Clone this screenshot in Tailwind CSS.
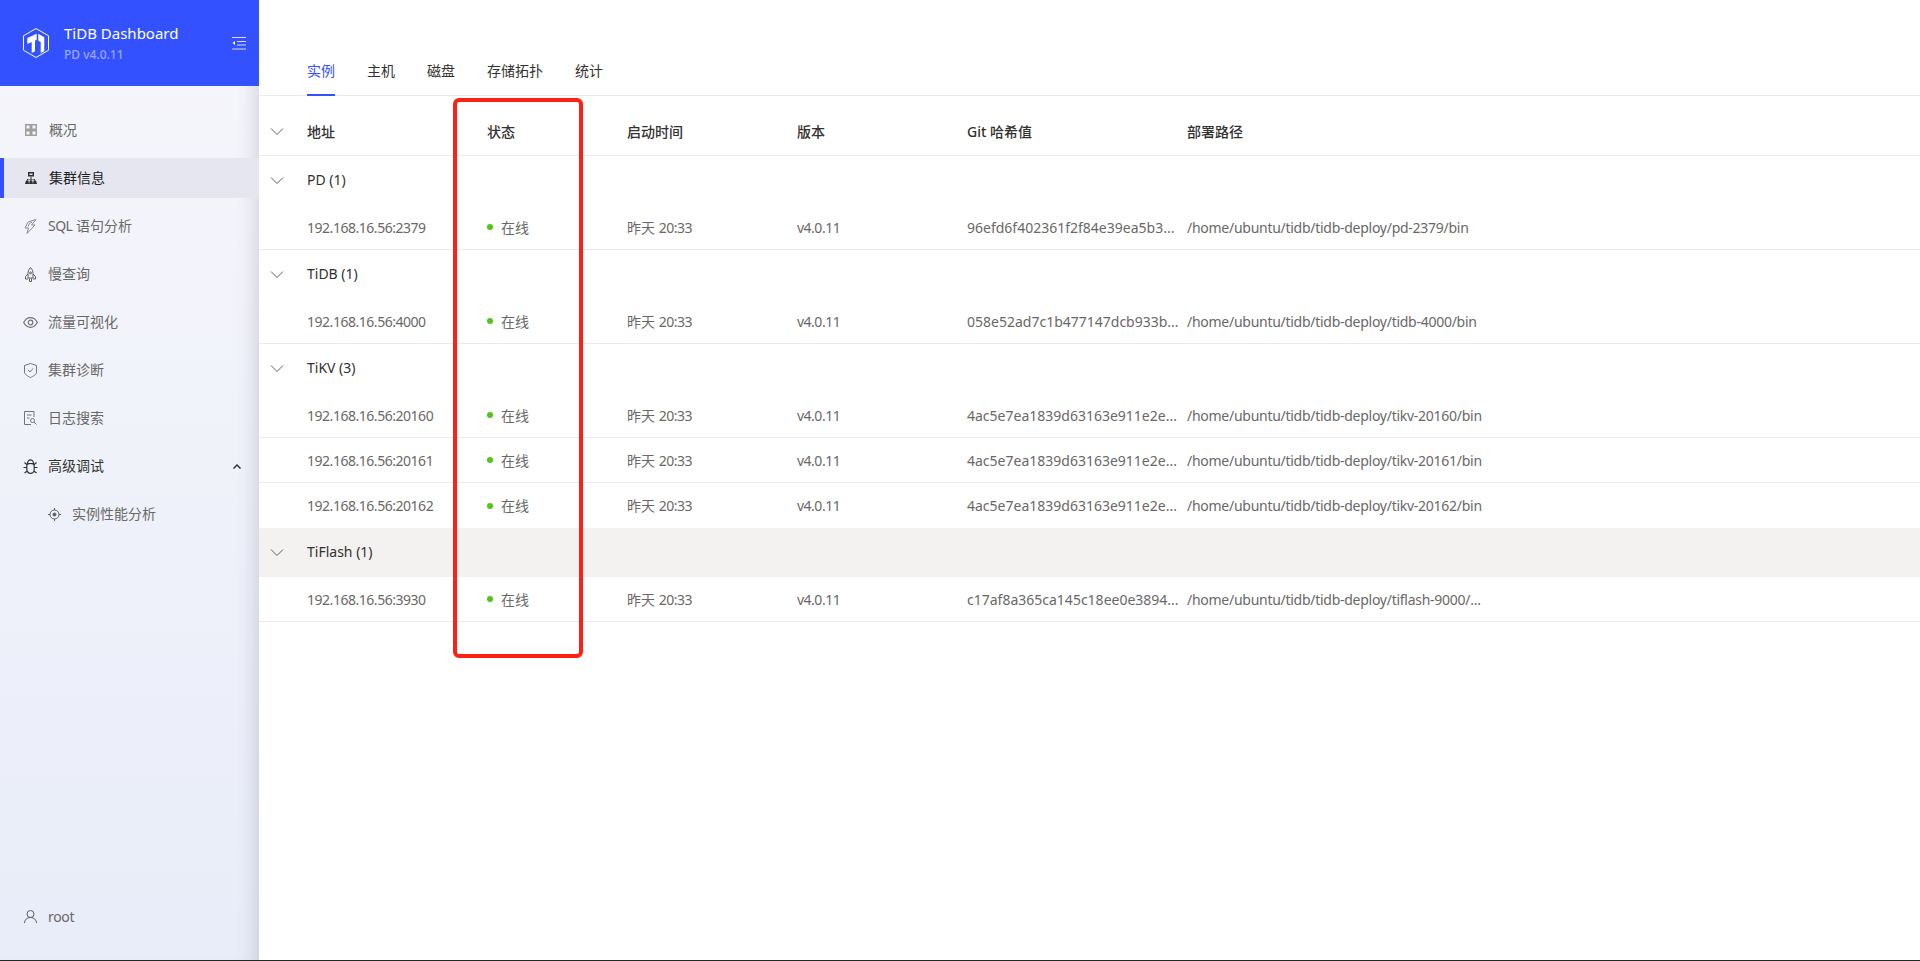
<!DOCTYPE html>
<html lang="zh">
<head>
    <meta charset="UTF-8">
    <title>TiDB Dashboard</title>
    <script src="https://cdn.jsdelivr.net/npm/@tailwindcss/browser@4"></script>
    <style>
      body{
        font-family: "Noto Sans", "Noto Sans CJK SC", sans-serif;
      }
    </style>
</head>
<body class="bg-white h-[961px] overflow-hidden relative">
  <div class="flex h-[960px]">
    <!-- sidebar -->
    <aside class="w-[259px] shrink-0 flex flex-col bg-gradient-to-b from-[#f6f6fb] to-[#e9edf9] shadow-[inset_-18px_0_18px_-14px_rgba(90,90,120,0.22)]">
      <div class="h-[86px] bg-[#3351ff] flex items-center pl-[23px] pr-[13px] text-white">
        <svg class="w-[26px] h-[30px] shrink-0" viewBox="0 0 26 30" fill="none">
          <path d="M13 .5 25.500 7.800v14.400L13 29.500.500 22.200V7.800z" stroke="white"/>
          <path d="M4.300 10 13.700 5.700v6L12 12.700v10.600L8.700 25V14L4.300 16z" fill="white"/>
          <path d="M15.300 5.700 21.300 9.300v14L17.700 25V14l-2.400-1.300z" fill="white"/>
        </svg>
        <div class="ml-[15px] flex-1">
          <div class="text-[15px] leading-[20px] mt-[-1px]">TiDB Dashboard</div>
          <div class="text-[12px] leading-[16px] mt-[4px] text-white/50 font-medium">PD v4.0.11</div>
        </div>
        <svg class="w-[14px] h-[13px]" viewBox="0 0 14 13" fill="none" stroke="white" stroke-opacity="0.8">
          <path d="M0 .5h14M5 4.500h9M5 8h9M0 12h14"/>
          <path d="M3 4 .500 6 3 8z" fill="white" stroke="none"/>
        </svg>
      </div>
      <nav class="mt-[24px] flex flex-col text-[14px] text-[#6a6866]">
        <a class="h-[40px] flex items-center pl-[24px] gap-[11px]">
          <svg class="w-[12px] h-[12px] mx-px" viewBox="0 0 12 12" fill="none" stroke="#a19f9d" stroke-width="1.500"><path d="M.750.750h4.500v4.500H.750zM6.750.750h4.500v4.500h-4.500zM.750 6.750h4.500v4.500H.750zM6.750 6.750h4.500v4.500h-4.500z"/></svg>
          <span class="-mt-[2px]">概况</span>
        </a>
        <a class="mt-[8px] h-[40px] flex items-center gap-[11px] text-[#201f1e] bg-[#e6e6f0] border-l-[4px] border-[#3351ff] pl-[20px]">
          <svg class="w-[12px] h-[12px] mx-px" viewBox="0 0 12 12" fill="#323130"><path d="M3 0h6v4.500H3z"/><path d="M4.500 1.500h3v1.500h-3z" fill="#e6e6f0"/><path d="M5.500 4.500h1V7H10v1.500H9V7.500H6.500v1h-1v-1H3v1H2V7h3.500z"/><path d="M1 8.500h2.500L4 12H0zM4.800 8.500h2.400L8 12H4zM8.500 8.500H11l1 3.500H8z"/></svg>
          <span class="-mt-[2px]">集群信息</span>
        </a>
        <a class="mt-[8px] h-[40px] flex items-center pl-[24px] gap-[11px]">
          <svg class="w-[13px] h-[15px]" viewBox="0 0 13 15" fill="none" stroke="#8a8886"><path d="M12 .500 4 3 1 9h3.500L3 14.500 11 6H7.500z"/><path d="M8 3 5.500 4.500 4 7.500"/></svg>
          <span class="-mt-[2px]"><span class="tracking-[-0.5px]">SQL</span> 语句分析</span>
        </a>
        <a class="mt-[8px] h-[40px] flex items-center pl-[24px] gap-[11px]">
          <svg class="w-[13px] h-[15px]" viewBox="0 0 13 15" fill="none" stroke="#605e5c"><path d="M6.500.500C4.500 2.500 4 4.500 4 6.500V11h5V6.500c0-2-.500-4-2.500-6zM4 7 1.500 9.500V12H4M9 7l2.500 2.500V12H9M5.500 11.500v3h2v-3"/><circle cx="6.500" cy="6" r="1"/></svg>
          <span class="-mt-[2px]">慢查询</span>
        </a>
        <a class="mt-[8px] h-[40px] flex items-center pl-[23px] gap-[10px]">
          <svg class="w-[15px] h-[11px]" viewBox="0 0 15 11" fill="none" stroke="#767472" stroke-width="1.200"><path d="M.700 5.500C2.500 2 5 .700 7.500.700s5 1.300 6.800 4.800c-1.800 3.500-4.300 4.800-6.800 4.800S2.500 9 .700 5.500z"/><circle cx="7.500" cy="5.500" r="2.300"/></svg>
          <span class="-mt-[2px]">流量可视化</span>
        </a>
        <a class="mt-[8px] h-[40px] flex items-center pl-[24px] gap-[11px]">
          <svg class="w-[13px] h-[15px]" viewBox="0 0 13 15" fill="none" stroke="#767472"><path d="M6.500.500 12.500 2.500v6.500c0 2.500-3 4-6 5.500-3-1.500-6-3-6-5.500V2.500z"/><path d="m4 7 2 2 3-3.500"/></svg>
          <span class="-mt-[2px]">集群诊断</span>
        </a>
        <a class="mt-[8px] h-[40px] flex items-center pl-[24px] gap-[11px]">
          <svg class="w-[13px] h-[14px]" viewBox="0 0 13 14" fill="none" stroke="#767472"><path d="M7 13.500H.500V.500h9.500V6M3 4h4.500M3 7h2.500"/><circle cx="8.500" cy="9.500" r="2"/><path d="m10 11 2.500 2.500"/></svg>
          <span class="-mt-[2px]">日志搜索</span>
        </a>
        <a class="mt-[8px] h-[40px] flex items-center pl-[23px] gap-[10px] pr-[18px] text-[#323130]">
          <svg class="w-[15px] h-[15px]" viewBox="0 0 15 15" fill="none" stroke="#323130" stroke-width="1.200"><path d="M4.500 4.500C4.500 2.500 6 .800 7.500.800s3 1.700 3 3.700z"/><path d="M3.800 7c0-1.500 1-2.500 3.700-2.500s3.700 1 3.700 2.500v3.500c0 2.200-1.700 3.900-3.700 3.900s-3.700-1.700-3.700-3.900zM3.800 5.500 1.500 3.500M11.200 5.500l2.300-2M3.800 8.500H.500M11.200 8.500h3.300M4.300 12 1.500 14M10.700 12l2.800 2"/></svg>
          <span class="flex-1 -mt-[2px]">高级调试</span>
          <svg class="w-[8px] h-[5px]" viewBox="0 0 8 5" fill="#323130"><path d="M4 0 8 4 7 5 4 2 1 5 0 4z"/></svg>
        </a>
        <a class="mt-[8px] h-[40px] flex items-center pl-[48px] gap-[11px]">
          <svg class="w-[13px] h-[13px]" viewBox="0 0 13 13" fill="none" stroke="#605e5c"><circle cx="6.500" cy="6.500" r="4.500"/><circle cx="6.500" cy="6.500" r="1.500" fill="#605e5c"/><path d="M6.500 0v2M6.500 11v2M0 6.500h2M11 6.500h2"/></svg>
          <span class="-mt-[2px]">实例性能分析</span>
        </a>
      </nav>
      <div class="mt-auto mb-[33px] flex items-center pl-[24px] gap-[11px] text-[14px] tracking-[-0.3px] text-[#6a6866]">
        <svg class="w-[13px] h-[13px]" viewBox="0 0 13 13" fill="none" stroke="#605e5c"><circle cx="6.500" cy="4" r="3.500"/><path d="M.500 13c0-3 2.500-5.500 6-5.500s6 2.500 6 5.500"/></svg>
        <span>root</span>
      </div>
    </aside>

    <!-- content -->
    <main class="flex-1 min-w-0 text-[14px] text-[#6a6866]">
      <div class="h-[96px] pt-[60px] pl-[48px] flex gap-[32px] border-b border-[#edebe9] text-[#323130]">
        <span class="h-[36px] leading-[22px] text-[#3351ff] border-b-2 border-[#3351ff]">实例</span>
        <span class="leading-[22px]">主机</span>
        <span class="leading-[22px]">磁盘</span>
        <span class="leading-[22px]">存储拓扑</span>
        <span class="leading-[22px]">统计</span>
      </div>

      <!-- header row -->
      <div class="h-[60px] pt-[12px] flex items-center border-b border-[#edebe9] font-medium text-[#323130]">
        <span class="w-[48px] pl-[11px]"><svg class="w-[14px] h-[8px]" viewBox="0 0 14 8" fill="none" stroke="#605e5c"><path d="m1 .500 6 6 6-6"/></svg></span>
        <span class="w-[180px]">地址</span>
        <span class="w-[140px]">状态</span>
        <span class="w-[170px]">启动时间</span>
        <span class="w-[170px]">版本</span>
        <span class="w-[220px]">Git 哈希值</span>
        <span>部署路径</span>
      </div>

      <!-- PD -->
      <div class="h-[49px] flex items-center text-[#323130]">
        <span class="w-[48px] pl-[11px]"><svg class="w-[14px] h-[8px]" viewBox="0 0 14 8" fill="none" stroke="#605e5c"><path d="m1 .500 6 6 6-6"/></svg></span>
        <span class="-mt-[2px]">PD (1)</span>
      </div>
      <div class="h-[45px] pl-[48px] flex items-center border-b border-[#edebe9]">
        <span class="w-[180px] tracking-[-0.47px]">192.168.16.56:2379</span>
        <span class="w-[140px] flex items-center"><i class="w-[6px] h-[6px] rounded-full bg-[#52c41a] mr-[8px]"></i>在线</span>
        <span class="w-[170px]">昨天 <span class="tracking-[-0.5px]">20:33</span></span>
        <span class="w-[170px] tracking-[-0.5px]">v4.0.11</span>
        <span class="w-[220px]">96efd6f402361f2f84e39ea5b3...</span>
        <span class="tracking-[-0.27px]">/home/ubuntu/tidb/tidb-deploy/pd-2379/bin</span>
      </div>

      <!-- TiDB -->
      <div class="h-[49px] flex items-center text-[#323130]">
        <span class="w-[48px] pl-[11px]"><svg class="w-[14px] h-[8px]" viewBox="0 0 14 8" fill="none" stroke="#605e5c"><path d="m1 .500 6 6 6-6"/></svg></span>
        <span class="-mt-[2px]">TiDB (1)</span>
      </div>
      <div class="h-[45px] pl-[48px] flex items-center border-b border-[#edebe9]">
        <span class="w-[180px] tracking-[-0.47px]">192.168.16.56:4000</span>
        <span class="w-[140px] flex items-center"><i class="w-[6px] h-[6px] rounded-full bg-[#52c41a] mr-[8px]"></i>在线</span>
        <span class="w-[170px]">昨天 <span class="tracking-[-0.5px]">20:33</span></span>
        <span class="w-[170px] tracking-[-0.5px]">v4.0.11</span>
        <span class="w-[220px]">058e52ad7c1b477147dcb933b...</span>
        <span class="tracking-[-0.27px]">/home/ubuntu/tidb/tidb-deploy/tidb-4000/bin</span>
      </div>

      <!-- TiKV -->
      <div class="h-[49px] flex items-center text-[#323130]">
        <span class="w-[48px] pl-[11px]"><svg class="w-[14px] h-[8px]" viewBox="0 0 14 8" fill="none" stroke="#605e5c"><path d="m1 .500 6 6 6-6"/></svg></span>
        <span class="-mt-[2px]">TiKV (3)</span>
      </div>
      <div class="h-[45px] pl-[48px] flex items-center border-b border-[#edebe9]">
        <span class="w-[180px] tracking-[-0.47px]">192.168.16.56:20160</span>
        <span class="w-[140px] flex items-center"><i class="w-[6px] h-[6px] rounded-full bg-[#52c41a] mr-[8px]"></i>在线</span>
        <span class="w-[170px]">昨天 <span class="tracking-[-0.5px]">20:33</span></span>
        <span class="w-[170px] tracking-[-0.5px]">v4.0.11</span>
        <span class="w-[220px]">4ac5e7ea1839d63163e911e2e...</span>
        <span class="tracking-[-0.27px]">/home/ubuntu/tidb/tidb-deploy/tikv-20160/bin</span>
      </div>
      <div class="h-[45px] pl-[48px] flex items-center border-b border-[#edebe9]">
        <span class="w-[180px] tracking-[-0.47px]">192.168.16.56:20161</span>
        <span class="w-[140px] flex items-center"><i class="w-[6px] h-[6px] rounded-full bg-[#52c41a] mr-[8px]"></i>在线</span>
        <span class="w-[170px]">昨天 <span class="tracking-[-0.5px]">20:33</span></span>
        <span class="w-[170px] tracking-[-0.5px]">v4.0.11</span>
        <span class="w-[220px]">4ac5e7ea1839d63163e911e2e...</span>
        <span class="tracking-[-0.27px]">/home/ubuntu/tidb/tidb-deploy/tikv-20161/bin</span>
      </div>
      <div class="h-[45px] pl-[48px] flex items-center">
        <span class="w-[180px] tracking-[-0.47px]">192.168.16.56:20162</span>
        <span class="w-[140px] flex items-center"><i class="w-[6px] h-[6px] rounded-full bg-[#52c41a] mr-[8px]"></i>在线</span>
        <span class="w-[170px]">昨天 <span class="tracking-[-0.5px]">20:33</span></span>
        <span class="w-[170px] tracking-[-0.5px]">v4.0.11</span>
        <span class="w-[220px]">4ac5e7ea1839d63163e911e2e...</span>
        <span class="tracking-[-0.27px]">/home/ubuntu/tidb/tidb-deploy/tikv-20162/bin</span>
      </div>

      <!-- TiFlash -->
      <div class="h-[49px] flex items-center text-[#323130] bg-[#f3f2f1]">
        <span class="w-[48px] pl-[11px]"><svg class="w-[14px] h-[8px]" viewBox="0 0 14 8" fill="none" stroke="#605e5c"><path d="m1 .500 6 6 6-6"/></svg></span>
        <span class="-mt-[2px]">TiFlash (1)</span>
      </div>
      <div class="h-[45px] pl-[48px] flex items-center border-b border-[#edebe9]">
        <span class="w-[180px] tracking-[-0.47px]">192.168.16.56:3930</span>
        <span class="w-[140px] flex items-center"><i class="w-[6px] h-[6px] rounded-full bg-[#52c41a] mr-[8px]"></i>在线</span>
        <span class="w-[170px]">昨天 <span class="tracking-[-0.5px]">20:33</span></span>
        <span class="w-[170px] tracking-[-0.5px]">v4.0.11</span>
        <span class="w-[220px]">c17af8a365ca145c18ee0e3894...</span>
        <span class="tracking-[-0.27px]">/home/ubuntu/tidb/tidb-deploy/tiflash-9000/...</span>
      </div>
    </main>
  </div>

  <!-- hand-drawn annotation over the status column -->
  <div class="absolute left-[453px] top-[98px] w-[130px] h-[560px] border-[4px] border-[#ff2015] rounded-[6px]"></div>
  <div class="h-px bg-[#1d2b20]"></div>
</body>
</html>
